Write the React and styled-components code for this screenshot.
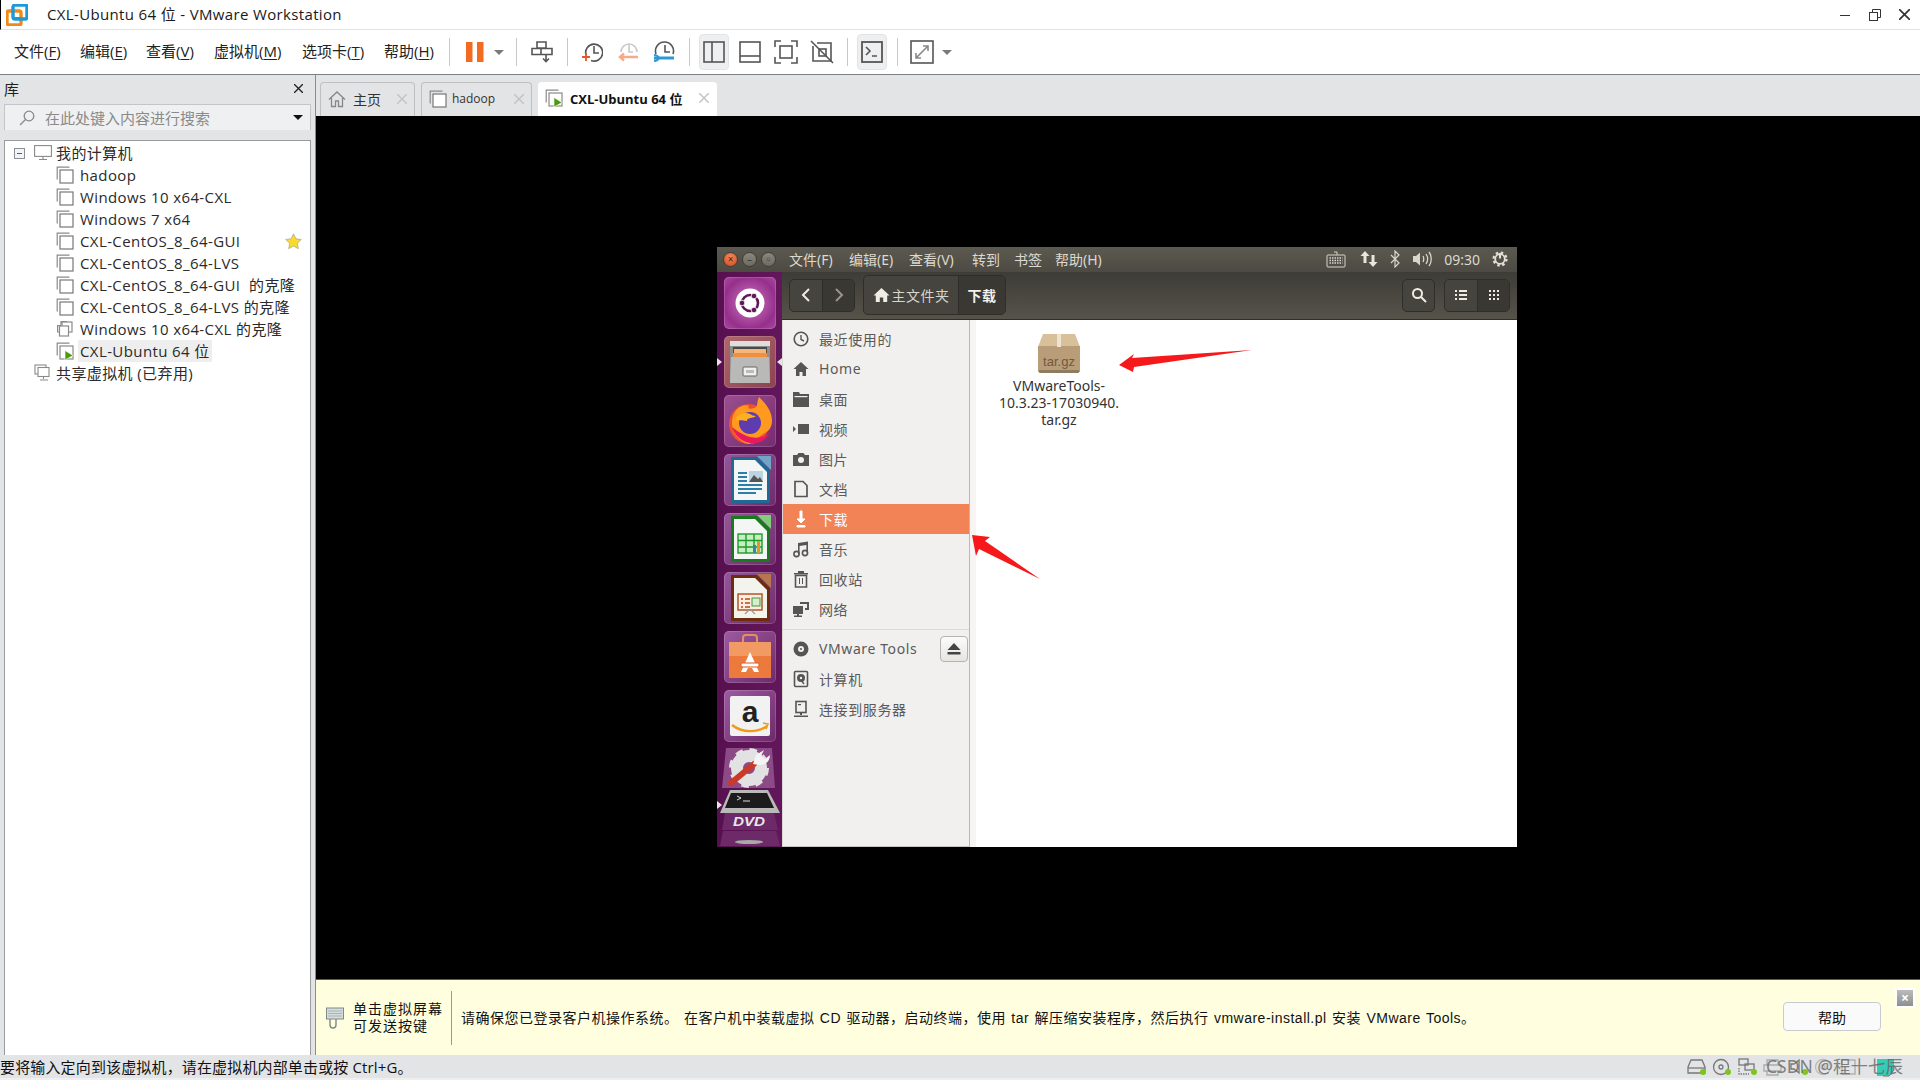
import styled, { createGlobalStyle } from "styled-components";

const winFont = `"Open Sans", "Noto Sans CJK SC", sans-serif`;
const vmFont = `"Noto Sans", "Noto Sans CJK SC", sans-serif`;

const Global = createGlobalStyle`
  html, body { margin: 0; padding: 0; background: #e3e4e6; }
  * { box-sizing: border-box; }
`;

const Page = styled.div`
  position: relative;
  width: 1920px;
  height: 1080px;
  display: flex;
  flex-direction: column;
  overflow: hidden;
  font-family: ${winFont};
  color: #222;
  background: #e3e4e6;
`;

/* title bar */
const TitleBar = styled.div`
  height: 30px;
  flex: none;
  display: flex;
  align-items: center;
  background: #fff;
  border-left: 1px solid #000;
  border-bottom: 1px solid #e2e2e2;
  padding-left: 5px;
`;
const TitleText = styled.span`
  margin: 0 0 2px 19px;
  font-size: 15px;
  letter-spacing: 0.35px;
  color: #1a1a1a;
  white-space: nowrap;
`;
const WinButtons = styled.div`
  margin-left: auto;
  display: flex;
  gap: 18px;
  padding-right: 10px;
  align-items: center;
`;

/* menu + toolbar */
const Toolbar = styled.div`
  height: 45px;
  flex: none;
  display: flex;
  align-items: center;
  background: #fff;
  border-bottom: 1px solid #7d7f82;
  padding-left: 14px;
`;
const MenuItem = styled.span`
  width: ${(p) => p.$w}px;
  margin: 0 ${(p) => p.$r ?? 18}px 4px 0;
  font-size: 15px;
  color: #222;
  white-space: nowrap;
  u { text-underline-offset: 2px; }
`;
const ToolSep = styled.div`
  width: 1px;
  height: 28px;
  background: #c8c8c8;
  margin: 0 ${(p) => p.$r ?? 14}px 0 ${(p) => p.$l ?? 14}px;
`;
const ToolGap = styled.span`
  width: ${(p) => p.$w}px;
  flex: none;
`;
const ToolBtn = styled.div`
  width: ${(p) => p.$w || 30}px;
  height: 36px;
  margin-right: ${(p) => p.$gap || 0}px;
  display: flex;
  align-items: center;
  justify-content: center;
  border-radius: 4px;
  background: ${(p) => (p.$on ? "#eeeff0" : "transparent")};
  border: 1px solid ${(p) => (p.$on ? "#e2e3e4" : "transparent")};
`;
const Caret = styled.span`
  width: 0;
  height: 0;
  flex: none;
  margin: ${(p) => p.$m || "0"};
  border-left: 5px solid transparent;
  border-right: 5px solid transparent;
  border-top: 5px solid ${(p) => p.$c || "#7a7a7a"};
`;

/* main split */
const Body = styled.div`
  flex: 1;
  display: flex;
  min-height: 0;
`;
const Library = styled.aside`
  width: 315px;
  flex: none;
  display: flex;
  flex-direction: column;
  padding: 0 4px 6px 4px;
`;
const LibHead = styled.div`
  height: 29px;
  flex: none;
  display: flex;
  align-items: center;
  justify-content: space-between;
  font-size: 15px;
  padding: 0 8px 2px 0;
`;
const SearchBox = styled.div`
  height: 26px;
  flex: none;
  display: flex;
  align-items: center;
  background: #eff0f1;
  border: 1px solid #c4c5c7;
  border-bottom: none;
  padding: 0 7px 0 14px;
  font-size: 15px;
  color: #8a8a8a;
`;
const SearchHint = styled.div`
  margin-left: 10px;
  flex: 1;
  white-space: nowrap;
`;
const Tree = styled.div`
  margin-top: 10px;
  flex: 1;
  background: #fff;
  border: 1px solid #9a9b9d;
  padding-top: 1px;
`;
const TreeRow = styled.div`
  height: 22px;
  display: flex;
  align-items: center;
  padding-left: ${(p) => p.$indent}px;
  font-size: 15px;
  letter-spacing: 0.4px;
  color: #2a2a2a;
  white-space: nowrap;
`;
const TreeLabel = styled.span`
  margin-left: ${(p) => p.$ml ?? 4}px;
  padding: 0 2px;
  line-height: 22px;
  white-space: pre;
  background: ${(p) => (p.$on ? "#eeeeee" : "transparent")};
`;
const Expander = styled.span`
  width: 11px;
  height: 11px;
  margin-right: 9px;
  border: 1px solid #8b8f96;
  position: relative;
  background: #f3f4f6;
  &::after {
    content: "";
    position: absolute;
    left: 2px;
    right: 2px;
    top: 4px;
    height: 1px;
    background: #3c5f8f;
  }
`;
const StarSlot = styled.span`
  margin-left: auto;
  margin-right: 8px;
  display: flex;
`;

const Workspace = styled.main`
  flex: 1;
  min-width: 0;
  display: flex;
  flex-direction: column;
  border-left: 1px solid #8a8c8f;
`;
const Tabs = styled.div`
  height: 41px;
  flex: none;
  display: flex;
  align-items: flex-end;
  gap: 6px;
  padding-left: 4px;
`;
const Tab = styled.div`
  width: ${(p) => p.$w}px;
  height: 34px;
  display: flex;
  align-items: center;
  padding: 0 ${(p) => p.$pr || 7}px 2px 7px;
  border-radius: 4px 4px 0 0;
  background: ${(p) => (p.$on ? "#fff" : "#e3e4e6")};
  border: ${(p) => (p.$on ? "none" : "1px solid #bfc0c2")};
  border-bottom: none;
  font-size: ${(p) => p.$fs || 14}px;
  font-weight: ${(p) => (p.$on ? 700 : 400)};
  color: ${(p) => (p.$on ? "#111" : "#333")};
  white-space: nowrap;
`;
const TabLabel = styled.span`
  margin-left: ${(p) => p.$ml || 7}px;
  flex: 1;
`;
const Stage = styled.div`
  flex: 1;
  min-height: 0;
  display: flex;
  align-items: center;
  justify-content: center;
  padding: 0 2px 2px 0;
  background: #000;
`;

/* guest ubuntu window */
const Guest = styled.div`
  position: relative;
  width: 800px;
  height: 600px;
  flex: none;
  display: flex;
  flex-direction: column;
  font-family: ${vmFont};
  background: #fff;
`;
const GuestTop = styled.div`
  height: 25px;
  flex: none;
  display: flex;
  align-items: center;
  padding-left: 6px;
  background: linear-gradient(#5c5950, #4c4a42);
  color: #dcd9cf;
  font-size: 14px;
`;
const Dot = styled.span`
  width: 15px;
  height: 15px;
  margin-right: 4px;
  border-radius: 50%;
  display: flex;
  align-items: center;
  justify-content: center;
  font-size: 10px;
  line-height: 1;
  color: ${(p) => (p.$red ? "#5b1d08" : "#3c3a34")};
  background: ${(p) => (p.$red ? "radial-gradient(circle at 50% 30%, #f2875a, #d1491f)" : "linear-gradient(#8a877d, #6c6a61)")};
  border: 1px solid #3f3d37;
`;
const GuestMenu = styled.span`
  width: ${(p) => p.$w}px;
  margin-right: 14px;
  white-space: nowrap;
`;
const Tray = styled.div`
  margin-left: auto;
  display: flex;
  align-items: center;
  padding-right: 9px;
  gap: 12px;
  font-size: 14px;
`;
const GuestRow = styled.div`
  flex: 1;
  min-height: 0;
  display: flex;
`;
const Launcher = styled.div`
  position: relative;
  width: 65px;
  flex: none;
  display: flex;
  flex-direction: column;
  align-items: center;
  gap: 7px;
  padding: 5px 0 0 0;
  background: linear-gradient(90deg, #57104f, #63175b);
`;
const Tile = styled.div`
  width: 52px;
  height: 52px;
  flex: none;
  border-radius: 5px;
  display: flex;
  align-items: center;
  justify-content: center;
  background: ${(p) => p.$bg};
  box-shadow: inset 0 0 0 1px rgba(255, 255, 255, 0.16);
`;
const Pip = styled.span`
  position: absolute;
  top: ${(p) => p.$top}px;
  ${(p) => (p.$right ? "right: 0;" : "left: 0;")}
  width: 0;
  height: 0;
  border-top: 4px solid transparent;
  border-bottom: 4px solid transparent;
  ${(p) => (p.$right ? "border-right: 5px solid #e8e4e4;" : "border-left: 5px solid #e8e4e4;")}
`;
const Nautilus = styled.div`
  flex: 1;
  min-width: 0;
  display: flex;
  flex-direction: column;
`;
const NautBar = styled.div`
  height: 48px;
  flex: none;
  display: flex;
  align-items: center;
  padding: 0 7px 0 7px;
  background: linear-gradient(#3e3c37, #56534a);
  border-bottom: 1px solid #2f2e2a;
`;
const BtnGroup = styled.div`
  display: flex;
  height: ${(p) => p.$h || 33}px;
  margin-left: ${(p) => p.$ml || 0}px;
  border: 1px solid #2f2e2a;
  border-radius: 5px;
  overflow: hidden;
  background: #46443e;
`;
const BarBtn = styled.div`
  width: ${(p) => p.$w || 32}px;
  display: flex;
  align-items: center;
  justify-content: center;
  gap: 2px;
  color: ${(p) => (p.$on ? "#f2f0ea" : "#d8d5cb")};
  font-size: 14px;
  letter-spacing: 0.5px;
  font-weight: ${(p) => (p.$on ? 700 : 400)};
  background: ${(p) => (p.$on ? "#3a3833" : "transparent")};
  & + & { border-left: 1px solid #2f2e2a; }
`;
const Spring = styled.div`flex: 1;`;
const Panes = styled.div`
  flex: 1;
  min-height: 0;
  display: flex;
`;
const Places = styled.nav`
  width: 188px;
  flex: none;
  padding-top: 4px;
  background: #f1f0ee;
  border-right: 1px solid #b9b8b4;
  border-left: 1px solid #d9d8d5;
  border-bottom: 1px solid #c6c5c2;
`;
const Place = styled.div`
  height: 30px;
  display: flex;
  align-items: center;
  padding-left: 9px;
  font-size: 14px;
  letter-spacing: 0.6px;
  color: ${(p) => (p.$on ? "#fff" : "#5a5a5a")};
  background: ${(p) => (p.$on ? "#f28357" : "transparent")};
  svg { margin-right: 9px; flex: none; }
  svg * { ${(p) => (p.$on ? "fill: #fff; stroke: #fff;" : "")} }
`;
const PlaceDivider = styled.div`
  height: 1px;
  margin: 5px 0 4px;
  background: #dcdbd8;
`;
const Eject = styled.div`
  margin-left: auto;
  margin-right: 1px;
  width: 28px;
  height: 26px;
  border: 1px solid #b4b3af;
  border-radius: 4px;
  display: flex;
  align-items: center;
  justify-content: center;
  background: linear-gradient(#fbfbfa, #e6e5e2);
  svg { margin: 0; }
`;
const Gutter = styled.div`
  width: 6px;
  flex: none;
  background: #f6f5f3;
`;
const Files = styled.div`
  flex: 1;
  padding: 14px 0 0 22px;
  background: #fff;
`;
const FileItem = styled.div`
  width: 122px;
  display: flex;
  flex-direction: column;
  align-items: center;
  font-size: 14px;
  line-height: 17px;
  color: #333;
  text-align: center;
  svg { margin-bottom: 3px; }
`;
const Marks = styled.svg`
  position: absolute;
  left: 0;
  top: 0;
  pointer-events: none;
`;

/* notice + status */
const Notice = styled.div`
  position: relative;
  height: 76px;
  flex: none;
  display: flex;
  align-items: center;
  padding-left: 10px;
  background: #ffffe0;
  border-top: 1px solid #5c5c50;
  color: #111;
`;
const HintText = styled.div`
  margin: 0 0 2px 9px;
  width: 98px;
  font-size: 14px;
  line-height: 17px;
  letter-spacing: 1px;
  flex: none;
  white-space: nowrap;
`;
const NoticeSep = styled.div`
  width: 1px;
  height: 54px;
  background: #9a9a90;
  margin-right: 9px;
  flex: none;
`;
const Message = styled.div`
  flex: 1;
  margin-bottom: 2px;
  font-family: "Liberation Sans", "Noto Sans CJK SC", sans-serif;
  font-size: 14px;
  white-space: nowrap;
  letter-spacing: 0.5px;
  word-spacing: 1px;
`;
const HelpBtn = styled.div`
  width: 98px;
  height: 29px;
  margin: 0 39px 2px 0;
  display: flex;
  align-items: center;
  justify-content: center;
  font-size: 14px;
  background: #fafafa;
  border: 1px solid #c9cad0;
  border-radius: 4px;
  flex: none;
`;
const NoticeClose = styled.div`
  position: absolute;
  right: 7px;
  top: 10px;
  width: 16px;
  height: 16px;
  display: flex;
  align-items: center;
  justify-content: center;
  background: linear-gradient(#bbb, #8f8f8f);
  color: #fff;
  font-size: 14px;
  font-weight: 700;
  line-height: 1;
  outline: 2px solid #fff;
`;
const StatusBar = styled.footer`
  position: absolute;
  left: 0;
  right: 0;
  bottom: 0;
  height: 25px;
  display: flex;
  align-items: center;
  background: #e3e4e6;
  border-bottom: 2px solid #eeeff0;
  font-size: 15px;
  letter-spacing: 0.15px;
  color: #111;
  white-space: nowrap;
`;
const StatusIcons = styled.div`
  margin-left: auto;
  padding-right: 24px;
  display: flex;
  gap: 5.5px;
  align-items: center;
`;
const Watermark = styled.div`
  position: absolute;
  right: 17px;
  bottom: 1px;
  font-family: ${vmFont};
  font-size: 17.5px;
  line-height: 26px;
  color: rgba(100, 100, 100, 0.8);
  white-space: nowrap;
`;

/* drawings */
const VmLogo = () => (
  <svg width="22" height="22" viewBox="0 0 22 22">
    <rect x="1" y="7" width="14" height="14" rx="2" fill="none" stroke="#f08a16" strokeWidth="3.4" />
    <rect x="7" y="1" width="14" height="14" rx="2" fill="none" stroke="#1c9ad6" strokeWidth="3.4" />
    <rect x="7" y="13" width="8" height="2" fill="#1c9ad6" />
  </svg>
);
const S = ({ w = 24, h = 24, children, vb }) => (
  <svg width={w} height={h} viewBox={vb || `0 0 ${w} ${h}`} fill="none" stroke="#555" strokeWidth="1.6">
    {children}
  </svg>
);
const VmIcon = ({ play, clone }) => (
  <svg width="18" height="18" viewBox="0 0 18 18" fill="none" stroke="#8a8a8a" strokeWidth="1.2">
    {clone ? (
      <>
        <path d="M5 5.5H1.6V12h3.4M5 5V1.6h6" />
        <rect x="6" y="2" width="10" height="10" fill="#fff" />
        <rect x="3.5" y="6" width="9" height="10" fill="#fff" />
      </>
    ) : (
      <>
        <path d="M13.5 1.2H1.2V13.5" />
        <rect x="4" y="4" width="13" height="13" fill="#fff" stroke={play ? "#8a8a8a" : "#777"} />
      </>
    )}
    {play && <path d="M9 8.5l8 5-8 4.5z" fill="#4c9a0a" stroke="#fff" strokeWidth=".6" />}
  </svg>
);
const Close = ({ c = "#c4c4c4", s = 10 }) => (
  <svg width={s} height={s} viewBox="0 0 10 10" stroke={c} strokeWidth="1.5" style={{ flex: "none" }}>
    <path d="M0 0l10 10M10 0L0 10" />
  </svg>
);
const G = ({ children, w = 18, h = 18 }) => (
  <svg width={w} height={h} viewBox="0 0 18 18" fill="#555" stroke="none">
    {children}
  </svg>
);
const OkDot = () => <circle cx="16" cy="14" r="3" fill="#7cc61c" stroke="none" />;

const tiles = [
  {
    bg: "radial-gradient(circle at 50% 50%, #d28cc6 0, #b155a6 35%, #962f8c 70%, #a94aa0 100%)",
    art: (
      <svg width="36" height="36" viewBox="0 0 36 36">
        <circle cx="18" cy="18" r="14.5" fill="#fff" />
        <circle cx="18" cy="18" r="8" fill="none" stroke="#5e1a56" strokeWidth="2.6" />
        <circle cx="10" cy="18" r="2.8" fill="#5e1a56" stroke="#fff" strokeWidth=".8" />
        <circle cx="22" cy="11" r="2.8" fill="#5e1a56" stroke="#fff" strokeWidth=".8" />
        <circle cx="22" cy="25" r="2.8" fill="#5e1a56" stroke="#fff" strokeWidth=".8" />
      </svg>
    ),
  },
  {
    bg: "linear-gradient(135deg,#b0666c,#8a4350)",
    art: (
      <svg width="44" height="44" viewBox="0 0 44 44">
        <rect x="2" y="1" width="40" height="42" rx="2" fill="#8f8f8d" />
        <rect x="2" y="1" width="40" height="5" fill="#dededc" />
        <rect x="5" y="7" width="34" height="12" fill="#4c4a48" />
        <rect x="6" y="9" width="32" height="4" fill="#f4b779" />
        <rect x="5" y="13" width="34" height="5" fill="#ef8f3f" />
        <path d="M3 17h38l1 26H2z" fill="#b9b9b7" />
        <rect x="15" y="27" width="14" height="9" rx="1" fill="#efefef" stroke="#666" />
        <rect x="18" y="30" width="8" height="3" fill="#bbb" />
      </svg>
    ),
  },
  {
    bg: "linear-gradient(135deg,#9a4f90,#772b70)",
    art: (
      <svg width="46" height="48" viewBox="0 0 46 48">
        <circle cx="22" cy="27" r="20" fill="#f0502a" />
        <path d="M5 26C5 12 16 6 22 9c-3 4 6 3 8 0 0-3 1-7 2-9 8 8 13 15 13 24 0 3-1 6-3 9L22 47C12 45 5 36 5 26z" fill="#ff9a1f" />
        <path d="M5 30c4 12 14 17 24 16 7-1 12-6 14-11-6 7-20 10-38-5z" fill="#e9195f" />
        <circle cx="23" cy="26" r="11" fill="#5f3bb0" />
        <path d="M8 22c4-6 10-7 15-5 2 1 3 2 6 2-4 3-9 1-9 5-5-1-8 0-12-2z" fill="#ffb01f" />
      </svg>
    ),
  },
  {
    bg: "linear-gradient(135deg,#96589a,#6d2a6b)",
    art: (
      <svg width="42" height="48" viewBox="0 0 42 48">
        <path d="M2 1h26l13 13v33H2z" fill="#1e6a92" />
        <path d="M5 4h21l12 12v28H5z" fill="#f4f6f6" />
        <path d="M28 0l14 14V0z" fill="#6fa5c5" />
        <path d="M9 17h9M9 21h9M9 25h9M9 29h24M9 33h24M9 37h18" stroke="#2e7eaa" strokeWidth="2" />
        <rect x="20" y="15" width="14" height="11" fill="#bcd4e2" />
        <path d="M20 26l5-7 4 4 2-2 3 5z" fill="#555" />
      </svg>
    ),
  },
  {
    bg: "linear-gradient(135deg,#96589a,#6d2a6b)",
    art: (
      <svg width="42" height="48" viewBox="0 0 42 48">
        <path d="M2 1h26l13 13v33H2z" fill="#197a1d" />
        <path d="M5 4h21l12 12v28H5z" fill="#f4f6f6" />
        <path d="M28 0l14 14V0z" fill="#7fcf7a" />
        <rect x="9" y="19" width="24" height="19" fill="#c5efc0" stroke="#1f9a2a" strokeWidth="1.4" />
        <path d="M17 19v19M25 19v19M9 25.5h24M9 32h24" stroke="#1f9a2a" strokeWidth="1.4" />
        <rect x="24" y="30" width="3" height="8" fill="#3f7fb5" />
        <rect x="28" y="26" width="3" height="12" fill="#e8912e" />
      </svg>
    ),
  },
  {
    bg: "linear-gradient(135deg,#96589a,#6d2a6b)",
    art: (
      <svg width="42" height="48" viewBox="0 0 42 48">
        <path d="M2 1h26l13 13v33H2z" fill="#6b2e0c" />
        <path d="M5 4h21l12 12v28H5z" fill="#f4f4ef" />
        <path d="M28 0l14 14V0z" fill="#b5774f" />
        <rect x="9" y="20" width="24" height="16" fill="#fbeee0" stroke="#b4491a" strokeWidth="1.4" />
        <path d="M12 25h2M12 29h2M12 33h2M16 25h5M16 29h5M16 33h5" stroke="#b4491a" strokeWidth="1.6" />
        <rect x="23" y="24" width="8" height="8" fill="#d7ecd0" stroke="#3d9a3d" />
        <path d="M20 36l-4 4M22 36l4 4" stroke="#999" strokeWidth="1.2" />
      </svg>
    ),
  },
  {
    bg: "linear-gradient(135deg,#9c5ba0,#6d2a6b)",
    art: (
      <svg width="44" height="46" viewBox="0 0 44 46">
        <path d="M15 10V4a3 3 0 013-3h8a3 3 0 013 3v6" fill="none" stroke="#e8905c" strokeWidth="2" />
        <path d="M1 8h42v36H1z" fill="#ec7a3c" />
        <path d="M1 8h42v14H1z" fill="#f19a63" />
        <path d="M22 18l-9 20h5l2-4h4l2 4h5z" fill="#fff" />
        <rect x="13" y="29" width="18" height="4" rx="1" fill="#fff" stroke="#e0561d" />
      </svg>
    ),
  },
  {
    bg: "linear-gradient(135deg,#9c5ba0,#6d2a6b)",
    art: (
      <svg width="42" height="42" viewBox="0 0 42 42">
        <rect x="1" y="1" width="40" height="40" rx="2" fill="#f2f2f2" />
        <text x="21" y="27" textAnchor="middle" fontFamily="Liberation Sans, sans-serif" fontWeight="700" fontSize="30" fill="#222">a</text>
        <path d="M3 30c10 8 26 8 35 1" fill="none" stroke="#f29a18" strokeWidth="2.4" />
        <path d="M34 28l5 1-2 5" fill="none" stroke="#f29a18" strokeWidth="1.6" />
      </svg>
    ),
  },
];

const placesTop = [
  ["最近使用的", <G key="a"><circle cx="9" cy="9" r="6.8" fill="none" stroke="#555" strokeWidth="1.6" /><path d="M9 5v4.5l3 1.5" fill="none" stroke="#555" strokeWidth="1.4" /></G>],
  ["Home", <G key="b"><path d="M9 2L1.5 9H4v7h3.5v-4h3v4H14V9h2.5z" /></G>],
  ["桌面", <G key="c"><path d="M1 2h6l1 2h9v13H1z" /><path d="M2.5 6h13v1.2h-13z" fill="#f1f0ee" /></G>],
  ["视频", <G key="d"><path d="M6 4h11v10H6zM1 6l3 3-3 3z" /></G>],
  ["图片", <G key="e"><path d="M1 5h4l1.5-2h5L13 5h4v11H1z" /><circle cx="9" cy="10" r="3" fill="#f1f0ee" /></G>],
  ["文档", <G key="f"><path d="M3 1.5h8l4 4v11H3z" fill="none" stroke="#555" strokeWidth="1.7" /></G>],
  ["下载", <G key="g"><path d="M8 1h2v8h3l-4 4-4-4h3z" /><path d="M5 15.5h8V17H5z" /></G>, true],
  ["音乐", <G key="h"><path d="M6 3l10-1.5v11h-1.6V5L7.6 6v8H6z" /><circle cx="4.5" cy="14" r="2.6" fill="none" stroke="#555" strokeWidth="1.6" /><circle cx="13" cy="13" r="2.6" fill="none" stroke="#555" strokeWidth="1.6" /></G>],
  ["回收站", <G key="i"><path d="M6 1h6v2h4v1.5H2V3h4z" /><path d="M3.5 5.5h11V17h-11z" fill="none" stroke="#555" strokeWidth="1.6" /><path d="M7 8h1v6H7zM10 8h1v6h-1z" /></G>],
  ["网络", <G key="j"><path d="M1 6h10v8H7v1.5h3V17H2v-1.5h3V14H1z" /><path d="M8 2h9v8h-4V8h2V4H8z" /></G>],
];

const App = () => {
  return (
    <Page>
      <Global />
      <TitleBar>
        <VmLogo />
        <TitleText>CXL-Ubuntu 64 位 - VMware Workstation</TitleText>
        <WinButtons>
          <svg width="12" height="12" viewBox="0 0 12 12" stroke="#333"><path d="M1 6.5h10" /></svg>
          <svg width="12" height="12" viewBox="0 0 12 12" fill="none" stroke="#333"><rect x=".5" y="3.5" width="8" height="8" /><path d="M3.5 3.5v-3h8v8h-3" /></svg>
          <Close c="#333" s={11} />
        </WinButtons>
      </TitleBar>

      <Toolbar>
        <MenuItem $w={48}>文件(<u>F</u>)</MenuItem>
        <MenuItem $w={48}>编辑(<u>E</u>)</MenuItem>
        <MenuItem $w={50}>查看(<u>V</u>)</MenuItem>
        <MenuItem $w={70}>虚拟机(<u>M</u>)</MenuItem>
        <MenuItem $w={64}>选项卡(<u>T</u>)</MenuItem>
        <MenuItem $w={48} $r={0}>帮助(<u>H</u>)</MenuItem>
        <ToolSep $l={17} $r={16} />
        <svg width="18" height="22" viewBox="0 0 18 22"><rect x="0" y="1" width="6.5" height="20" fill="#f26b21" /><rect x="11" y="1" width="6.5" height="20" fill="#f26b21" /></svg>
        <Caret $m="0 12px 0 10px" />
        <ToolSep $l={0} $r={14} />
        <S w={22} h={24}><path d="M6 2h9v6H6zM1 8.5h9v6H1zM10 8.5h11v6H10z" /><path d="M15 14.5V21m-3-2.500l3 3 3-3" /></S>
        <ToolSep $l={14} $r={13} />
        <S w={22} h={24}>
          <path d="M5 15a8.5 8.5 0 1 1 5 5.500" />
          <path d="M13 6v7h5" />
          <path d="M1 17h8M5 13v8" stroke="#e0592a" strokeWidth="1.8" />
        </S>
        <ToolGap $w={14} />
        <S w={22} h={24}>
          <path d="M4 12a8 8 0 0 1 16 0" stroke="#c9c9c9" />
          <path d="M12 5v7h4" stroke="#c9c9c9" />
          <path d="M21 17H3M7 13.5L3 17l4 3.500" stroke="#f8a98a" strokeWidth="2.4" />
        </S>
        <ToolGap $w={14} />
        <S w={22} h={24}>
          <path d="M3 14a9 9 0 1 1 17 0" />
          <path d="M12 5v7h5" />
          <path d="M1 18h20" stroke="#2e98d6" strokeWidth="3" />
          <path d="M1 15c3 0 4 1 5 3-1 2-2 3-5 3" stroke="#2e98d6" strokeWidth="2" />
        </S>
        <ToolSep $l={14} $r={9} />
        <ToolBtn $w={30} $on $gap={10}>
          <S w={22} h={22}><rect x="1" y="1" width="20" height="20" /><path d="M9 1v20" /></S>
        </ToolBtn>
        <S w={22} h={22}><rect x="1" y="1" width="20" height="20" /><path d="M1 15h20" /></S>
        <ToolGap $w={13} />
        <S w={24} h={24}>
          <path d="M1 7V1h6M17 1h6v6M23 17v6h-6M7 23H1v-6" />
          <rect x="6" y="6" width="12" height="12" />
        </S>
        <ToolGap $w={12} />
        <S w={24} h={24}>
          <path d="M3 6v15h18V3H7" />
          <rect x="9" y="9" width="7" height="7" />
          <path d="M1 1l22 22" />
        </S>
        <ToolSep $l={13} $r={9} />
        <ToolBtn $w={30} $on $gap={10}>
          <S w={22} h={22}><rect x="1" y="1" width="20" height="20" strokeWidth="1.8" /><path d="M5 6l4 4-4 4M11 15h5" /></S>
        </ToolBtn>
        <ToolSep $l={0} $r={12} />
        <S w={24} h={24}>
          <rect x="1" y="1" width="22" height="22" />
          <path d="M6 18l12-12M6 13v5h5M13 6h5v5" stroke="#888" />
        </S>
        <Caret $m="0 0 0 8px" />
      </Toolbar>

      <Body>
        <Library>
          <LibHead>
            库
            <Close c="#222" s={9} />
          </LibHead>
          <SearchBox>
            <svg width="16" height="16" viewBox="0 0 16 16" fill="none" stroke="#888" strokeWidth="1.3"><circle cx="10" cy="6" r="4.8" /><path d="M6.500 9.500L1 15" /></svg>
            <SearchHint>在此处键入内容进行搜索</SearchHint>
            <Caret $c="#111" />
          </SearchBox>
          <Tree>
            <TreeRow $indent={9}>
              <Expander />
              <svg width="18" height="16" viewBox="0 0 18 16" fill="none" stroke="#8a8a8a" strokeWidth="1.1"><rect x=".6" y=".6" width="16.8" height="10.8" /><path d="M9 11.500V14M5 14.500h8" /></svg>
              <TreeLabel $ml={2}>我的计算机</TreeLabel>
            </TreeRow>
            {["hadoop", "Windows 10 x64-CXL", "Windows 7 x64"].map((n) => (
              <TreeRow key={n} $indent={51}><VmIcon /><TreeLabel>{n}</TreeLabel></TreeRow>
            ))}
            <TreeRow $indent={51}>
              <VmIcon /><TreeLabel>CXL-CentOS_8_64-GUI</TreeLabel>
              <StarSlot>
                <svg width="17" height="16" viewBox="0 0 17 16"><path d="M8.500.8l2.400 5 5.400.7-4 3.800 1 5.400-4.800-2.700-4.800 2.700 1-5.400-4-3.800 5.400-.7z" fill="#fbd92f" stroke="#b3ab8a" strokeWidth=".8" /></svg>
              </StarSlot>
            </TreeRow>
            {["CXL-CentOS_8_64-LVS", "CXL-CentOS_8_64-GUI  的克隆", "CXL-CentOS_8_64-LVS 的克隆"].map((n) => (
              <TreeRow key={n} $indent={51}><VmIcon /><TreeLabel>{n}</TreeLabel></TreeRow>
            ))}
            <TreeRow $indent={51}><VmIcon clone /><TreeLabel>Windows 10 x64-CXL 的克隆</TreeLabel></TreeRow>
            <TreeRow $indent={51}><VmIcon play /><TreeLabel $on>CXL-Ubuntu 64 位</TreeLabel></TreeRow>
            <TreeRow $indent={29}>
              <svg width="18" height="18" viewBox="0 0 18 18" fill="#fff" stroke="#8a8a8a" strokeWidth="1.1"><rect x="1" y="1" width="11" height="9" /><rect x="4" y="3.500" width="11" height="9" /><path d="M9.500 12.500V15M6 16h8" /></svg>
              <TreeLabel $ml={2}>共享虚拟机 (已弃用)</TreeLabel>
            </TreeRow>
          </Tree>
        </Library>

        <Workspace>
          <Tabs>
            <Tab $w={95} $pr={7}>
              <svg width="18" height="18" viewBox="0 0 18 18" fill="none" stroke="#888" strokeWidth="1.3"><path d="M1 9.500L9 2l8 7.500M3.500 8v8.500h4V11h3v5.500h4V8" /></svg>
              <TabLabel>主页</TabLabel>
              <Close />
            </Tab>
            <Tab $w={111} $fs={12} $pr={7}>
              <VmIcon />
              <TabLabel $ml={5}>hadoop</TabLabel>
              <Close />
            </Tab>
            <Tab $w={179} $on $fs={13} $pr={8}>
              <VmIcon play />
              <TabLabel>CXL-Ubuntu 64 位</TabLabel>
              <Close />
            </Tab>
          </Tabs>
          <Stage>
            <Guest>
              <GuestTop>
                <Dot $red>×</Dot>
                <Dot>–</Dot>
                <Dot>▫</Dot>
                <ToolGap $w={9} />
                <GuestMenu $w={46}>文件(F)</GuestMenu>
                <GuestMenu $w={46}>编辑(E)</GuestMenu>
                <GuestMenu $w={49}>查看(V)</GuestMenu>
                <GuestMenu $w={28}>转到</GuestMenu>
                <GuestMenu $w={27}>书签</GuestMenu>
                <GuestMenu $w={50}>帮助(H)</GuestMenu>
                <Tray>
                  <svg width="20" height="20" viewBox="0 0 20 20" fill="none" stroke="#d8d5cb" style={{ marginRight: 2 }}><rect x="1" y="6" width="18" height="12" rx="1" /><path d="M3.500 9h13M3.500 11.500h13M3.500 14h13" strokeDasharray="1.500 1" strokeWidth="1.5" /><path d="M11 6V3H8" /></svg>
                  <svg width="18" height="18" viewBox="0 0 18 18" fill="#e8e5db"><path d="M5 1L.5 6h3v7h3V6h3zM13 17l4.500-5h-3V5h-3v7h-3z" /></svg>
                  <svg width="10" height="18" viewBox="0 0 10 18" fill="none" stroke="#d8d5cb" strokeWidth="1.2"><path d="M1 5l8 8-4 4V1l4 4-8 8" /></svg>
                  <svg width="20" height="18" viewBox="0 0 20 18" fill="#d8d5cb"><path d="M1 6h3l4-3.500v13L4 12H1z" /><path d="M11 6c1 2 1 4 0 6M14 4c2 3 2 7 0 10M17 2c3 4 3 10 0 14" fill="none" stroke="#d8d5cb" strokeWidth="1.3" /></svg>
                  <span>09:30</span>
                  <svg width="16" height="16" viewBox="0 0 16 16" fill="none" stroke="#e2dfd5">
                    <circle cx="8" cy="8" r="6.4" strokeWidth="2.4" strokeDasharray="2.500 2.520" />
                    <circle cx="8" cy="8" r="4.8" strokeWidth="1.8" />
                    <path d="M8 2v5.500" strokeWidth="2" />
                  </svg>
                </Tray>
              </GuestTop>
              <GuestRow>
                <Launcher>
                  {tiles.map((t, i) => (
                    <Tile key={i} $bg={t.bg}>{t.art}</Tile>
                  ))}
                  <svg width="65" height="100" viewBox="0 0 65 100" style={{ marginTop: -2, flex: "none" }}>
                    <path d="M9 1h46l3 40H5z" fill="#8c4a87" />
                    <circle cx="32" cy="21" r="17" fill="none" stroke="#e2e2e2" strokeWidth="6" strokeDasharray="7 6.350" />
                    <circle cx="32" cy="21" r="12" fill="none" stroke="#e2e2e2" strokeWidth="12" />
                    <path d="M14 36L37 17" stroke="#c93a28" strokeWidth="6" strokeLinecap="round" />
                    <path d="M36 17l3-9 8-5-3 6 4 3 5-4c0 6-4 10-11 10z" fill="#f4f4f4" />
                    <path d="M13 43h38l12 23H3z" fill="#b9b9b7" />
                    <path d="M14 46h36l7 15H8z" fill="#1c1c1c" />
                    <path d="M20 49l4 2-4 2M26 54h7" stroke="#ddd" fill="none" />
                    <path d="M8 66h49l4 17H5z" fill="#6d2a68" />
                    <text x="32" y="79" textAnchor="middle" fontFamily="Liberation Sans, sans-serif" fontWeight="700" fontStyle="italic" fontSize="12" textLength="32" lengthAdjust="spacingAndGlyphs" fill="#e8e8e8">DVD</text>
                    <path d="M6 84h53l4 15H3z" fill="#6d2a68" />
                    <ellipse cx="32" cy="95" rx="14" ry="2" fill="#a9a9a9" />
                  </svg>
                  <Pip $top={86} />
                  <Pip $top={86} $right />
                  <Pip $top={529} />
                </Launcher>
                <Nautilus>
                  <NautBar>
                    <BtnGroup>
                      <BarBtn>
                        <svg width="12" height="16" viewBox="0 0 12 16" fill="none" stroke="#efece3" strokeWidth="2"><path d="M9 2L3 8l6 6" /></svg>
                      </BarBtn>
                      <BarBtn $on>
                        <svg width="12" height="16" viewBox="0 0 12 16" fill="none" stroke="#96948b" strokeWidth="2"><path d="M3 2l6 6-6 6" /></svg>
                      </BarBtn>
                    </BtnGroup>
                    <BtnGroup $h={40} $ml={8}>
                      <BarBtn $w={94}>
                        <svg width="17" height="16" viewBox="0 0 17 16" fill="#efece3"><path d="M8.500 1L.5 8.500h2.300V15h4v-4.500h3.400V15h4V8.500h2.300z" /></svg>
                        主文件夹
                      </BarBtn>
                      <BarBtn $w={47} $on>下载</BarBtn>
                    </BtnGroup>
                    <Spring />
                    <BtnGroup>
                      <BarBtn $w={31}>
                        <svg width="16" height="16" viewBox="0 0 16 16" fill="none" stroke="#efece3" strokeWidth="2"><circle cx="6.500" cy="6.500" r="4.500" /><path d="M10 10l5 5" /></svg>
                      </BarBtn>
                    </BtnGroup>
                    <BtnGroup $ml={9}>
                      <BarBtn $w={32}>
                        <svg width="14" height="12" viewBox="0 0 14 12" fill="#efece3"><path d="M1 1h2v2H1zM5 1h8v2H5zM1 5h2v2H1zM5 5h8v2H5zM1 9h2v2H1zM5 9h8v2H5z" /></svg>
                      </BarBtn>
                      <BarBtn $w={32} $on>
                        <svg width="12" height="12" viewBox="0 0 12 12" fill="#efece3"><path d="M1 1h2v2H1zM5 1h2v2H5zM9 1h2v2H9zM1 5h2v2H1zM5 5h2v2H5zM9 5h2v2H9zM1 9h2v2H1zM5 9h2v2H5zM9 9h2v2H9z" /></svg>
                      </BarBtn>
                    </BtnGroup>
                  </NautBar>
                  <Panes>
                    <Places>
                      {placesTop.map(([n, ic, on]) => (
                        <Place key={n} $on={on}>{ic}{n}</Place>
                      ))}
                      <PlaceDivider />
                      <Place>
                        <G><circle cx="9" cy="9" r="7.5" /><circle cx="9" cy="9" r="3" fill="#f1f0ee" /><circle cx="9" cy="9" r="1" /></G>
                        VMware Tools
                        <Eject>
                          <svg width="14" height="12" viewBox="0 0 14 12" fill="#444"><path d="M7 0l6.500 7H.5zM.5 9h13v2.500H.5z" /></svg>
                        </Eject>
                      </Place>
                      <Place>
                        <G><rect x="2.5" y="1.5" width="13" height="15" rx="1" fill="none" stroke="#555" strokeWidth="1.6" /><circle cx="9" cy="8" r="4" /><circle cx="9" cy="8" r="1.2" fill="#f1f0ee" /><path d="M9 10l3 4" stroke="#555" strokeWidth="1.4" /></G>
                        计算机
                      </Place>
                      <Place>
                        <G><rect x="4" y="1.5" width="10" height="11" fill="none" stroke="#555" strokeWidth="1.6" /><path d="M6 4h3v1.200H6zM8 13h2v2H8zM2 15.500h14V17H2z" /></G>
                        连接到服务器
                      </Place>
                    </Places>
                    <Gutter />
                    <Files>
                      <FileItem>
                        <svg width="44" height="40" viewBox="0 0 44 40">
                          <path d="M6 0h32l5 13H1z" fill="#d8c09a" />
                          <rect x="1" y="12" width="42" height="26" fill="#b89d78" />
                          <path d="M20 0h4v13h-4z" fill="#efe3cf" />
                          <rect x="2" y="36" width="40" height="3" rx="1" fill="#8f7b5f" />
                          <text x="22" y="32" textAnchor="middle" fontFamily="Liberation Sans, sans-serif" fontSize="13" fill="#6d5a42">tar.gz</text>
                        </svg>
                        <span>VMwareTools-</span>
                        <span>10.3.23-17030940.</span>
                        <span>tar.gz</span>
                      </FileItem>
                    </Files>
                  </Panes>
                </Nautilus>
              </GuestRow>
              <Marks width="800" height="600" viewBox="0 0 800 600">
                <path d="M402 118l15-11-2 4 120-8-118 17-1 5z" fill="#f5191b" />
                <path d="M255 288l18 2-5 4 55 38-61-30-3 7z" fill="#f5191b" />
              </Marks>
            </Guest>
          </Stage>
          <Notice>
            <svg width="18" height="22" viewBox="0 0 18 22" fill="none" stroke="#7d8a8a"><rect x=".5" y="1" width="17" height="11" fill="#d6dcdc" /><path d="M2.500 4h13M2.500 6.500h13M2.500 9h13" strokeDasharray="1 1" /><path d="M4 12v6a3 3 0 0 0 6 0v-6" strokeWidth="1.4" /></svg>
            <HintText>单击虚拟屏幕<br />可发送按键</HintText>
            <NoticeSep />
            <Message>请确保您已登录客户机操作系统。 在客户机中装载虚拟 CD 驱动器，启动终端，使用 tar 解压缩安装程序，然后执行 vmware-install.pl 安装 VMware Tools。</Message>
            <HelpBtn>帮助</HelpBtn>
            <NoticeClose>×</NoticeClose>
          </Notice>
          <ToolGap $w={1} style={{ height: 25 }} />
        </Workspace>
      </Body>

      <StatusBar>
        要将输入定向到该虚拟机，请在虚拟机内部单击或按 Ctrl+G。
        <StatusIcons>
          <svg width="20" height="18" viewBox="0 0 20 18" fill="none" stroke="#777" strokeWidth="1.3"><path d="M1 9l3-7h11l3 7v6H1z" /><path d="M1 10h17" /><OkDot /></svg>
          <svg width="20" height="18" viewBox="0 0 20 18" fill="none" stroke="#777" strokeWidth="1.3"><circle cx="9" cy="9" r="7.5" /><circle cx="9" cy="9" r="2" /><OkDot /></svg>
          <svg width="20" height="18" viewBox="0 0 20 18" fill="none" stroke="#777" strokeWidth="1.3"><rect x="1" y="1" width="9" height="6" /><rect x="7" y="6" width="9" height="6" /><path d="M1 10v6h10" strokeDasharray="1.500 1" /><OkDot /></svg>
          <svg width="20" height="18" viewBox="0 0 20 18" fill="none" stroke="#aaa" strokeWidth="1.3"><path d="M4 7V2h11v5M1 7h17v6H1zM4 13v4h11v-4" /></svg>
          <svg width="20" height="18" viewBox="0 0 20 18" fill="none" stroke="#777" strokeWidth="1.3"><path d="M2 6h3l5-4v13l-5-4H2z" /><OkDot /></svg>
          <svg width="20" height="18" viewBox="0 0 20 18" fill="none" stroke="#bbb" strokeWidth="1.3"><circle cx="9" cy="9" r="7.5" /><circle cx="9" cy="9" r="2" /></svg>
          <svg width="20" height="18" viewBox="0 0 20 18" fill="none" stroke="#aaa" strokeWidth="1.3"><rect x="2" y="2" width="13" height="14" /></svg>
          <svg width="22" height="20" viewBox="0 0 22 20" style={{ marginLeft: 9 }}><path d="M3 2h17v11l-5 6H3z" fill="#35cdb6" /><path d="M20 8v5l-5 6H9" fill="none" stroke="#777" /></svg>
        </StatusIcons>
      </StatusBar>
      <Watermark>CSDN @程十七辰</Watermark>
    </Page>
  );
};

export default App;
